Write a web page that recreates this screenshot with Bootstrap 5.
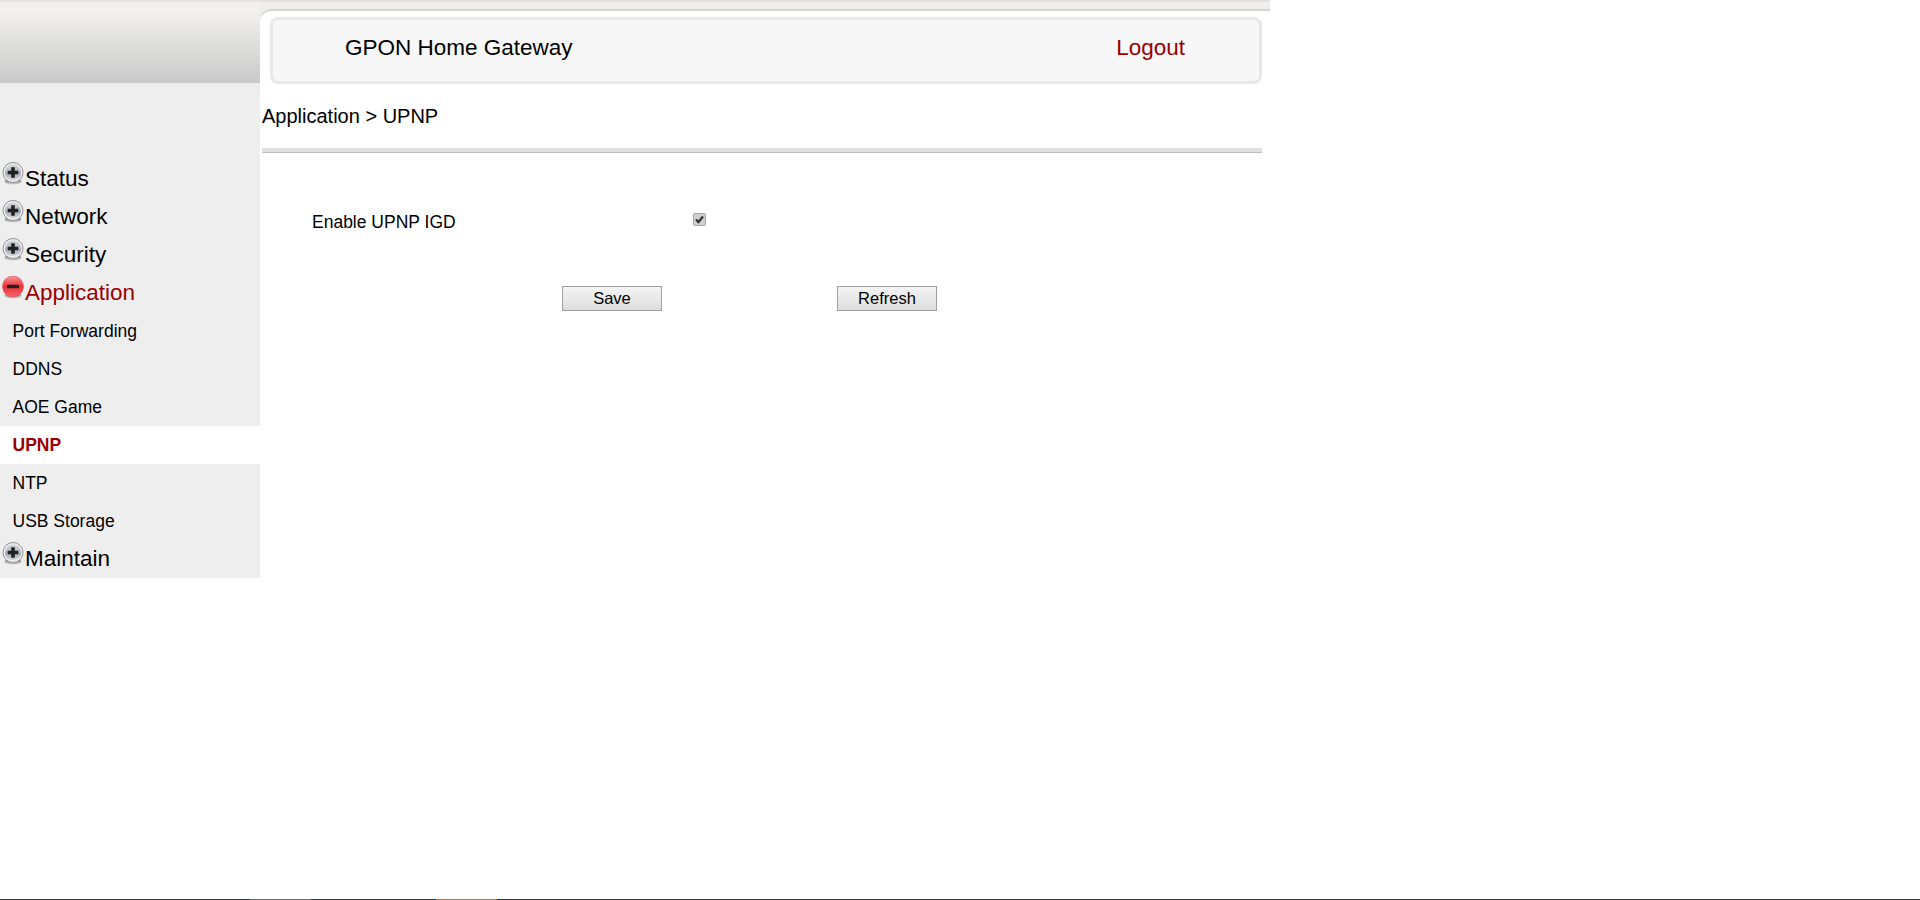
<!DOCTYPE html>
<html lang="en">
<head>
  <meta charset="UTF-8">
  <meta name="viewport" content="width=device-width, initial-scale=1.0">
  <title>GPON Home Gateway</title>
  <link href="https://cdn.jsdelivr.net/npm/bootstrap@5.3.0/dist/css/bootstrap.min.css" rel="stylesheet">
  <style>
    html, body { height: 100%; }
    body { font-family: "Liberation Sans", Arial, sans-serif; color: #000; background: #fff; overflow: hidden; }
    .page-shell { width: 1270px; }
    .side-col { width: 260px; }
    .side-head { height: 83px; background: linear-gradient(#f3f2f1, #f0efee 15%, #cdcdcd 92%, #c8c8c8); border-top: 2px solid #e2e2e2; }
    .side-menu { background: #eee; padding-top: 77px; }
    .menu-main { height: 38px; font-size: 22.5px; color: #000; padding-left: 2px; }
    .menu-main svg { margin-top: 2px; flex: none; }
    .menu-main span { line-height: 37px; }
    .menu-main.is-open { color: #990000; }
    .menu-sub { height: 38px; font-size: 17.5px; padding-left: 12.5px; }
    .menu-sub.is-active { background: #fff; color: #990000; font-weight: 700; }
    .main-col { background: linear-gradient(#f1f0ef, #cdcdcd) no-repeat; background-size: 100% 83px; border-top: 2px solid #e2e2e2; padding-top: 7px; }
    .main-panel { background: #fff; border-top: 2px solid #d4d4d4; border-top-left-radius: 12px; min-height: 569px; padding: 6px 8px 0 2px; }
    .top-box { margin-left: 8px; height: 67px; background: #f7f7f7; border: 3px solid #e8e8e8; border-radius: 8px; font-size: 22.5px; padding: 0 74px 5px 72px; }
    .logout-link { color: #990000; }
    .crumb-row { height: 64px; font-size: 20px; }
    .crumb-line { height: 5px; background: #e0e0e0; border-bottom: 1px solid #bdbdbd; }
    .upnp-form { padding: 54px 0 0 50px; font-size: 17.5px; }
    .upnp-label { width: 381px; padding-top: 2px; }
    .upnp-check.form-check-input { width: 13px; height: 13px; margin: 0; border: 1px solid #a8a8a8; border-radius: 2px; background-color: #cfcfcf; background-image: none; box-shadow: none; }
    .check-wrap { position: relative; line-height: 0; margin-top: 6px; }
    .check-wrap svg { position: absolute; left: 2px; top: 2px; pointer-events: none; }
    .btn-row { padding-left: 250px; margin-top: 51px; gap: 175px; }
    .gw-btn.btn { width: 100px; height: 25px; padding: 0; font-size: 16.5px; line-height: 23px; color: #000; background: linear-gradient(#f4f4f4, #dedede); border: 1px solid #a0a0a0; border-radius: 0; }
    .task-strip { height: 1px; background: #2a3a3c; margin-top: auto; flex: none; }
    .task-strip i { display: block; height: 1px; }
    .task-a { width: 61px; margin-left: 250px; background: #6a6e70; }
    .task-b { width: 61px; margin-left: 125px; background: #b87c3e; }
  </style>
</head>
<body class="d-flex flex-column">
  <svg width="0" height="0" class="position-absolute">
    <defs>
      <linearGradient id="grayBall" x1="0" y1="0" x2="0" y2="1">
        <stop offset="0" stop-color="#d8dade"/><stop offset="0.6" stop-color="#a8acb6"/><stop offset="1" stop-color="#dfe2e8"/>
      </linearGradient>
      <linearGradient id="redBall" x1="0" y1="0" x2="0" y2="1">
        <stop offset="0" stop-color="#f79a9c"/><stop offset="0.5" stop-color="#ea2e36"/><stop offset="1" stop-color="#f66a6e"/>
      </linearGradient>
      <linearGradient id="ballShade" x1="0" y1="0" x2="0" y2="1">
        <stop offset="0" stop-color="#777"/><stop offset="1" stop-color="#cfcfcf"/>
      </linearGradient>
      <symbol id="icoPlus" viewBox="0 0 23 24">
        <ellipse cx="11" cy="19.5" rx="8.5" ry="3" fill="url(#ballShade)"/>
        <circle cx="11" cy="10.5" r="10" fill="#f2f2f2" stroke="#8f8f8f"/>
        <circle cx="11" cy="10.5" r="8.2" fill="url(#grayBall)"/>
        <path d="M9.2 5.2h3.6v3.5h3.5v3.6h-3.5v3.5H9.2v-3.5H5.7V8.7h3.5z" fill="#222"/>
      </symbol>
      <symbol id="icoMinus" viewBox="0 0 23 24">
        <ellipse cx="11" cy="19.5" rx="8.5" ry="3" fill="url(#ballShade)"/>
        <circle cx="11" cy="10.5" r="10.5" fill="url(#redBall)" stroke="#d9484c" stroke-width="0.6"/>
        <rect x="5" y="8.7" width="12" height="3.6" rx="1" fill="#222"/>
      </symbol>
    </defs>
  </svg>

  <div class="page-shell d-flex">
    <div class="side-col">
      <div class="side-head"></div>
      <div class="side-menu">
        <div class="menu-main d-flex align-items-start"><svg width="23" height="24"><use href="#icoPlus"/></svg><span>Status</span></div>
        <div class="menu-main d-flex align-items-start"><svg width="23" height="24"><use href="#icoPlus"/></svg><span>Network</span></div>
        <div class="menu-main d-flex align-items-start"><svg width="23" height="24"><use href="#icoPlus"/></svg><span>Security</span></div>
        <div class="menu-main is-open d-flex align-items-start"><svg width="23" height="24"><use href="#icoMinus"/></svg><span>Application</span></div>
        <div class="menu-sub d-flex align-items-center">Port Forwarding</div>
        <div class="menu-sub d-flex align-items-center">DDNS</div>
        <div class="menu-sub d-flex align-items-center">AOE Game</div>
        <div class="menu-sub is-active d-flex align-items-center">UPNP</div>
        <div class="menu-sub d-flex align-items-center">NTP</div>
        <div class="menu-sub d-flex align-items-center">USB Storage</div>
        <div class="menu-main d-flex align-items-start"><svg width="23" height="24"><use href="#icoPlus"/></svg><span>Maintain</span></div>
      </div>
    </div>

    <div class="main-col flex-grow-1">
      <div class="main-panel">
        <div class="top-box d-flex align-items-center justify-content-between">
          <span>GPON Home Gateway</span>
          <span class="logout-link">Logout</span>
        </div>
        <div class="crumb-row d-flex align-items-center">Application &gt; UPNP</div>
        <div class="crumb-line"></div>
        <form class="upnp-form">
          <div class="d-flex align-items-start">
            <label class="upnp-label" for="upnpIgd">Enable UPNP IGD</label>
            <span class="check-wrap">
              <input class="form-check-input upnp-check" type="checkbox" id="upnpIgd" checked>
              <svg width="9" height="9" viewBox="0 0 9 9"><path d="M1 4.5l2.4 2.6L8 1.5" fill="none" stroke="#2e2e2e" stroke-width="2.2"/></svg>
            </span>
          </div>
          <div class="btn-row d-flex">
            <button type="button" class="btn gw-btn">Save</button>
            <button type="button" class="btn gw-btn">Refresh</button>
          </div>
        </form>
      </div>
    </div>
  </div>

  <div class="task-strip d-flex"><i class="task-a"></i><i class="task-b"></i></div>
</body>
</html>
